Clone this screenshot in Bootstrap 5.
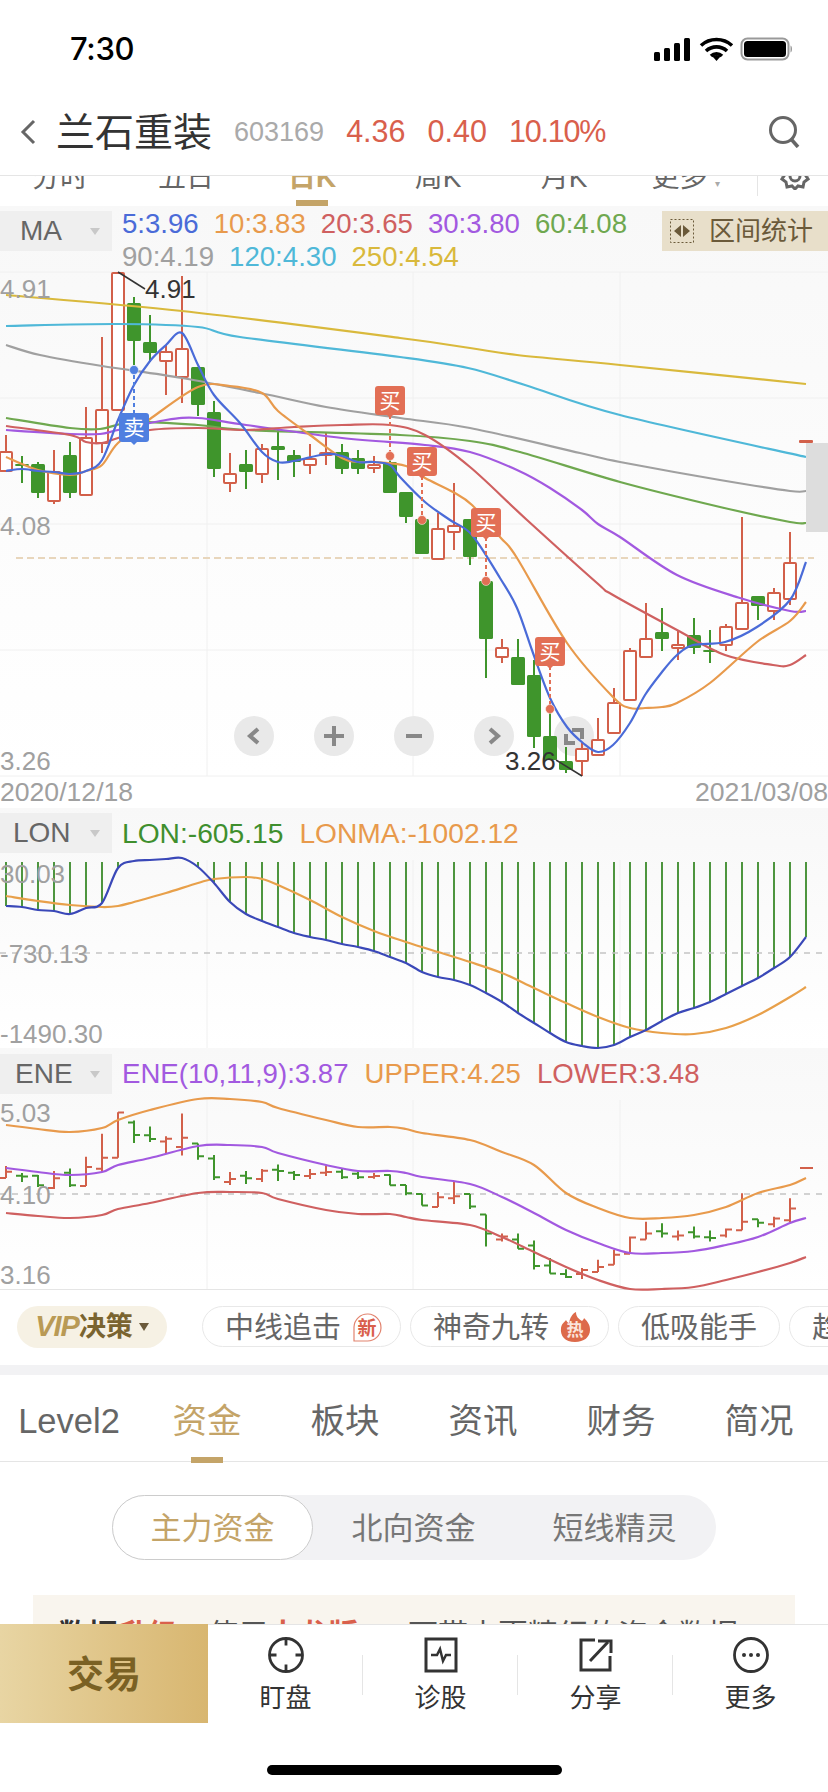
<!DOCTYPE html>
<html lang="zh">
<head>
  <meta charset="UTF-8">
  <meta name="viewport" content="width=device-width, initial-scale=1">
  <title>兰石重装</title>
  <link href="https://cdn.jsdelivr.net/npm/bootstrap@5.3.2/dist/css/bootstrap.min.css" rel="stylesheet">
  <style>
    body { width: 828px; height: 1792px; overflow: hidden; position: relative; background: #fff; color: #666;
      font-family: "Liberation Sans", "Noto Sans CJK SC", sans-serif; }
    .status-row { height: 100px; padding: 0 35px 2px 70px; }
    .clock { font-family: Inter, sans-serif; font-weight: 500; font-size: 31px; color: #000; letter-spacing: -.3px; }
    .top-nav { height: 76px; padding: 0 28px 11px 20px; border-bottom: 1px solid #e5e5e5; }
    .stock-name { font-size: 39px; color: #333; margin-left: 20px; line-height: 1; }
    .stock-code { font-size: 27px; color: #aaa; margin-left: 22px; }
    .stock-num { font-size: 30.5px; color: #d9604c; margin-left: 22px; }
    .stock-pct { letter-spacing: -1.2px; }
    .period-tabs { height: 30px; overflow: hidden; }
    .period-tab { width: 126px; height: 30px; position: relative; font-size: 28px; color: #666; }
    .period-tab span { margin-top: -13px; line-height: 30px; }
    .period-tab:first-child { margin-left: -3px; }
    .period-tab.on { color: #c4a468; font-weight: 700; }
    .period-tab.on::after { content: ""; position: absolute; left: 47px; bottom: 0; width: 32px; height: 6px; background: #c4a468; }
    .period-tab small { font-size: 10px; color: #aaa; }
    .period-more { margin-right: 3px; padding-right: 8px; }
    .gear-cell { height: 20px; margin-left: 1px; border-left: 1px solid #e5e5e5; padding-left: 22px; }
    .chart-panel { background: linear-gradient(#f8f8f8, #fff); }
    .ma-panel { height: 570px; }
    .lon-panel { height: 240px; }
    .ene-panel { height: 242px; border-bottom: 1px solid #e5e5e5; }
    .panel-head { height: 52px; padding-top: 5px; }
    .ene-panel .panel-head { padding-top: 6px; }
    .ma-head { height: 66px; }
    .pick { width: 112px; height: 40px; background: #efefef; color: #666; font-size: 28px; flex: none; position: relative; }
    .pick-ma { margin-top: 5px; padding-left: 20px; }
    .pick-lon { padding-left: 13px; }
    .pick-ene { padding-left: 15px; }
    .pick i { position: absolute; right: 12px; top: 17px; border: 5px solid transparent; border-top: 7px solid #c8c8c8; border-bottom: 0; }
    .vals { font-size: 27.6px; margin-left: 10px; white-space: nowrap; }
    .ma-vals { padding-top: 1px; }
    .val-line { line-height: 33px; column-gap: 15px; }
    .head-line { line-height: 40px; column-gap: 16px; }
    .lon-line { font-size: 28.2px; }
    .range-btn { width: 166px; height: 40px; background: #e8dfca; color: #6b5a3a; font-size: 26px; margin-top: 5px; padding-left: 8px; gap: 15px; }
    .chart-svg { display: block; overflow: visible; }
    .chart-svg text { font-family: "Liberation Sans", "Noto Sans CJK SC", sans-serif; }
    .date-row { height: 32px; font-size: 26.6px; color: #a0a0a0; line-height: 32px; }
    .c-blue { color: #4a6bd8; } .c-orange { color: #e89a4c; } .c-red { color: #cf6060; }
    .c-purple { color: #a259e0; } .c-green { color: #6fa84f; } .c-gray { color: #a0a0a0; }
    .c-cyan { color: #4fb8d8; } .c-yellow { color: #d9b93c; } .c-lon { color: #3f8f2e; }
    .chips-row { height: 75px; padding: 16px 0 0 17px; overflow: hidden; white-space: nowrap; }
    .vip-pill { width: 150px; height: 42px; background: #f6f1e4; margin-right: 35px; color: #7a6430; font-size: 27px; font-weight: 700; flex: none; }
    .vip-pill b { font-style: italic; color: #b99a55; font-size: 29px; letter-spacing: -1px; }
    .vip-pill i { border: 5px solid transparent; border-top: 8px solid #6b5a3a; border-bottom: 0; margin-left: 6px; }
    .chip { height: 41px; border: 1px solid #e8e8e8; margin-right: 9px; font-size: 29px; color: #666; padding-left: 22px; flex: none; gap: 10px; }
    .chip-wide { width: 199px; }
    .chip-mid { width: 162px; }
    .chip-end { width: 120px; }
    .chip span { padding-top: 4px; }
    .gap-band { height: 10px; background: #f2f2f4; }
    .detail-tabs { height: 87px; border-bottom: 1px solid #e5e5e5; }
    .detail-tab { width: 138px; height: 87px; position: relative; font-size: 34.5px; color: #666; padding-top: 6px; }
    .detail-tab.on { color: #c4a468; }
    .detail-tab.on::after { content: ""; position: absolute; left: 53px; bottom: -1px; width: 32px; height: 6px; background: #c4a468; }
    .segment { width: 604px; height: 65px; margin-top: 33px; background: #f2f2f4; border-radius: 33px; }
    .seg-item { width: 201px; font-size: 31px; color: #777; padding-top: 3px; }
    .seg-item.on { background: #fff; border: 1px solid #ccc; border-radius: 33px; color: #c4a468; }
    .notice { margin: 35px 33px 0; background: #f9f5ee; padding: 24px 25px; font-size: 30px; line-height: 32px; height: 120px; color: #555; white-space: nowrap; overflow: hidden; }
    .notice b { color: #333; } .notice em { color: #d9604c; font-style: normal; font-weight: 700; }
    .bottom-bar { height: 168px; left: 0; right: 0; background: #fff; border-top: 1px solid #e5e5e5; }
    .trade-btn { width: 208px; height: 99px; background: linear-gradient(90deg, #e8d5a3, #d8b670); color: #7a6124; font-size: 37px; font-weight: 700; margin-top: -1px; padding-top: 4px; }
    .tool-item { width: 155px; height: 98px; padding-top: 12px; font-size: 26px; color: #333; position: relative; line-height: 30px; }
    .tool-item svg { display: block; margin-bottom: 10px; }
    .tool-item:not(:last-child)::after { content: ""; position: absolute; right: 0; top: 30px; height: 40px; border-right: 1px solid #e5e5e5; }
    .home-bar { width: 295px; height: 10px; background: #000; border-radius: 5px; margin: 42px auto 0; }
  </style>
</head>
<body>

<div class="status-row d-flex align-items-center justify-content-between">
  <div class="clock">7:30</div>
  <svg width="139" height="24" viewBox="0 0 139 24">
    <g fill="#000"><rect x="0" y="15" width="6" height="9" rx="1.5"/><rect x="10" y="11" width="6" height="13" rx="1.5"/><rect x="20" y="6" width="6" height="18" rx="1.5"/><rect x="30" y="1" width="6" height="23" rx="1.5"/></g>
    <path d="M47 8.500a23 23 0 0 1 31 0M52 14a15.500 15.500 0 0 1 21 0M57 19a8 8 0 0 1 11 0" fill="none" stroke="#000" stroke-width="3.600"/>
    <path d="M62.500 24l-4-4.500a6 6 0 0 1 8 0z" fill="#000"/>
    <rect x="87.500" y="1.500" width="47" height="21" rx="6" fill="none" stroke="#999" stroke-width="2"/>
    <rect x="90" y="4" width="42" height="16" rx="3.500" fill="#000"/>
    <path d="M136.500 8.500c2 .5 2 6.500 0 7z" fill="#999"/>
  </svg>
</div>

<div class="top-nav d-flex align-items-center">
  <svg width="16" height="26" viewBox="0 0 16 26"><path d="M14 2L3 13l11 11" fill="none" stroke="#666" stroke-width="3"/></svg>
  <div class="stock-name">兰石重装</div>
  <div class="stock-code">603169</div>
  <div class="stock-num">4.36</div>
  <div class="stock-num">0.40</div>
  <div class="stock-num stock-pct">10.10%</div>
  <svg class="ms-auto" width="32" height="32" viewBox="0 0 32 32"><circle cx="15" cy="14" r="12.500" fill="none" stroke="#666" stroke-width="3"/><path d="M23 23l7 8" stroke="#666" stroke-width="3.500"/></svg>
</div>

<div class="period-tabs d-flex align-items-start">
  <div class="period-tab d-flex justify-content-center"><span>分时</span></div>
  <div class="period-tab d-flex justify-content-center"><span>五日</span></div>
  <div class="period-tab on d-flex justify-content-center"><span>日K</span></div>
  <div class="period-tab d-flex justify-content-center"><span>周K</span></div>
  <div class="period-tab d-flex justify-content-center"><span>月K</span></div>
  <div class="period-tab period-more d-flex justify-content-center"><span>更多 <small>▾</small></span></div>
  <div class="gear-cell">
    <svg width="30" height="14" viewBox="0 15 30 14" class="d-block"><path d="M15 4l3 3 5-1 1 5 4 3-2 1 2 3-4 3-1 5-5-1-3 3-3-3-5 1-1-5-4-3 2-3-2-1 4-3 1-5 5 1z" fill="none" stroke="#666" stroke-width="3"/><circle cx="15" cy="15" r="5" fill="none" stroke="#666" stroke-width="3"/></svg>
  </div>
</div>

<section class="chart-panel ma-panel">
  <div class="ma-head d-flex align-items-start">
    <div class="pick pick-ma d-flex align-items-center">MA<i></i></div>
    <div class="vals ma-vals flex-grow-1">
      <div class="val-line d-flex"><span class="c-blue">5:3.96</span><span class="c-orange">10:3.83</span><span class="c-red">20:3.65</span><span class="c-purple">30:3.80</span><span class="c-green">60:4.08</span></div>
      <div class="val-line d-flex"><span class="c-gray">90:4.19</span><span class="c-cyan">120:4.30</span><span class="c-yellow">250:4.54</span></div>
    </div>
    <div class="range-btn d-flex align-items-center">
      <svg width="24" height="24" viewBox="0 0 24 24"><rect x=".5" y=".5" width="23" height="23" fill="none" stroke="#6b5a3a" stroke-dasharray="2 2"/><path d="M11 6v12l-7-6zM13 6v12l7-6z" fill="#6b5a3a"/></svg>
      <span>区间统计</span>
    </div>
  </div>
  <svg id="maChart" class="chart-svg" width="828" height="504" viewBox="0 272 828 504"></svg>
</section>
<div class="date-row d-flex justify-content-between"><span>2020/12/18</span><span>2021/03/08</span></div>

<section class="chart-panel lon-panel">
  <div class="panel-head d-flex align-items-start">
    <div class="pick pick-lon d-flex align-items-center">LON<i></i></div>
    <div class="vals lon-line head-line d-flex"><span class="c-lon">LON:-605.15</span><span class="c-orange">LONMA:-1002.12</span></div>
  </div>
  <svg id="lonChart" class="chart-svg" width="828" height="188" viewBox="0 860 828 188"></svg>
</section>

<section class="chart-panel ene-panel">
  <div class="panel-head d-flex align-items-start">
    <div class="pick pick-ene d-flex align-items-center">ENE<i></i></div>
    <div class="vals head-line d-flex"><span class="c-purple">ENE(10,11,9):3.87</span><span class="c-orange">UPPER:4.25</span><span class="c-red">LOWER:3.48</span></div>
  </div>
  <svg id="eneChart" class="chart-svg" width="828" height="189" viewBox="0 1100 828 189"></svg>
</section>

<div class="chips-row d-flex align-items-start">
  <div class="vip-pill rounded-pill d-flex align-items-center justify-content-center"><b>VIP</b><span>决策</span><i></i></div>
  <div class="chip chip-wide rounded-pill d-inline-flex align-items-center"><span>中线追击</span>
    <svg width="32" height="30" viewBox="0 0 32 30"><path d="M3 29V15A13.500 13.500 0 1 1 16 29z" fill="#fff" stroke="#e2846f" stroke-width="1.200"/><text x="16" y="23" text-anchor="middle" font-size="19" font-weight="700" fill="#d9604c">新</text></svg>
  </div>
  <div class="chip chip-wide rounded-pill d-inline-flex align-items-center"><span>神奇九转</span>
    <svg width="32" height="32" viewBox="0 0 32 32"><path d="M16 31C6 31 1 25 2 17c1-5 3-5 5-8 1 2 2 3 3 3 1-5 3-9 7-11 0 5 3 7 6 9 1-1 2-2 2-3 4 4 6 7 6 12 0 7-6 12-15 12z" fill="#dd6a4a"/><text x="16" y="25" text-anchor="middle" font-size="17" font-weight="700" fill="#fbe4dc">热</text></svg>
  </div>
  <div class="chip chip-mid rounded-pill d-inline-flex align-items-center"><span>低吸能手</span></div>
  <div class="chip chip-end rounded-pill d-inline-flex align-items-center"><span>趋势</span></div>
</div>
<div class="gap-band"></div>

<div class="detail-tabs d-flex">
  <div class="detail-tab d-flex align-items-center justify-content-center">Level2</div>
  <div class="detail-tab on d-flex align-items-center justify-content-center">资金</div>
  <div class="detail-tab d-flex align-items-center justify-content-center">板块</div>
  <div class="detail-tab d-flex align-items-center justify-content-center">资讯</div>
  <div class="detail-tab d-flex align-items-center justify-content-center">财务</div>
  <div class="detail-tab d-flex align-items-center justify-content-center">简况</div>
</div>

<div class="segment d-flex mx-auto">
  <div class="seg-item on d-flex align-items-center justify-content-center">主力资金</div>
  <div class="seg-item d-flex align-items-center justify-content-center">北向资金</div>
  <div class="seg-item d-flex align-items-center justify-content-center">短线精灵</div>
</div>

<div class="notice"><b>数据</b><em>升级</em>，使用<em>大龙版</em>&nbsp;&nbsp;&nbsp;&nbsp;&nbsp;&nbsp;可带来更精细的资金数据</div>

<div class="bottom-bar position-absolute bottom-0">
  <div class="d-flex">
    <div class="trade-btn d-flex align-items-center justify-content-center">交易</div>
    <div class="tool-item d-flex flex-column align-items-center">
      <svg width="36" height="36" viewBox="0 0 36 36"><g fill="none" stroke="#333" stroke-width="2.800"><circle cx="18" cy="18" r="16.500"/><path d="M18 1.500v7M18 27.500v7M1.500 18h7M27.500 18h7"/></g></svg>
      盯盘
    </div>
    <div class="tool-item d-flex flex-column align-items-center">
      <svg width="36" height="36" viewBox="0 0 36 36"><rect x="3" y="2" width="30" height="32" fill="none" stroke="#333" stroke-width="3"/><path d="M8 18h6l3-6 3 12 3-6h5" fill="none" stroke="#333" stroke-width="2.500"/></svg>
      诊股
    </div>
    <div class="tool-item d-flex flex-column align-items-center">
      <svg width="36" height="36" viewBox="0 0 36 36"><path d="M17 3H3v30h29V19" fill="none" stroke="#333" stroke-width="3"/><path d="M12 24L30 5" stroke="#333" stroke-width="3"/><path d="M20 4h13v12" fill="none" stroke="#333" stroke-width="3"/></svg>
      分享
    </div>
    <div class="tool-item d-flex flex-column align-items-center">
      <svg width="36" height="36" viewBox="0 0 36 36"><circle cx="18" cy="18" r="16.500" fill="none" stroke="#333" stroke-width="2.800"/><circle cx="11" cy="18" r="2" fill="#333"/><circle cx="18" cy="18" r="2" fill="#333"/><circle cx="25" cy="18" r="2" fill="#333"/></svg>
      更多
    </div>
  </div>
  <div class="home-bar"></div>
</div>

<script>
  const RED = '#d2604a', GREEN = '#3f952c';

  // candles: colour, body top, body bottom, wick top, wick bottom
  const candles = [
    ['r',452,471,435,471],['g',464,466,456,483],['g',464,493,462,498],['r',472,501,450,504],
    ['g',455,493,442,498],['r',438,495,407,495],['r',410,443,337,453],['r',273,410,272,410],
    ['g',303,341,297,365],['g',342,353,315,362],['r',352,361,345,395],['r',349,377,276,403],
    ['g',367,405,367,416],['g',412,469,401,477],['r',474,483,453,492],['g',464,472,450,489],
    ['r',449,474,444,483],['g',446,450,430,480],['g',455,462,450,477],['r',459,465,444,474],
    ['r',453,455,433,465],['g',452,469,444,474],['g',458,469,450,474],['r',465,468,456,473],
    ['g',462,493,460,493],['g',492,517,492,523],['g',519,554,519,554],['r',529,559,513,559],
    ['r',526,532,483,550],['g',519,557,519,565],['g',581,639,581,678],['r',648,657,639,663],
    ['g',657,685,639,685],['g',675,737,660,748],['g',736,760,713,760],['g',761,770,747,773],
    ['r',749,761,743,776],['r',740,755,718,755],['r',703,733,688,733],['r',651,700,648,700],
    ['r',639,657,603,657],['g',632,639,608,651],['r',645,648,630,660],['g',635,648,618,654],
    ['g',650,652,630,663],['r',627,645,624,651],['r',603,629,517,629],['g',596,606,596,620],
    ['r',593,611,588,620],['r',563,599,532,605]
  ];

  const maLines = {
    '#d9b93c': [[6,295],[182,311],[400,338],[470,348],[517,355],[620,365],[806,384]],
    '#4fb8d8': [[6,326],[118,324],[198,327],[240,337],[400,357],[468,368],[525,385],[620,415],[806,457]],
    '#a0a0a0': [[6,345],[40,355],[102,366],[182,378],[260,393],[326,407],[400,418],[470,428],[580,453],[620,462],[720,480],[790,491],[806,491]],
    '#6fa84f': [[6,418],[70,428],[100,429],[134,422],[198,425],[246,430],[400,435],[470,441],[520,452],[620,482],[720,507],[790,522],[806,523]],
    '#a259e0': [[6,430],[70,434],[100,434],[118,430],[166,420],[198,418],[246,425],[342,438],[425,445],[470,452],[517,470],[550,488],[582,510],[598,524],[620,537],[677,575],[740,598],[790,611],[806,611]],
    '#cf6060': [[6,426],[70,435],[86,442],[102,443],[118,438],[150,430],[198,428],[246,430],[294,427],[342,425],[390,425],[425,435],[470,467],[527,520],[597,583],[613,595],[677,630],[725,655],[773,665],[790,665],[806,655]],
    '#e89a4c': [[6,457],[38,470],[70,475],[86,471],[102,465],[118,443],[150,419],[198,387],[230,386],[262,393],[278,411],[310,435],[342,458],[358,462],[374,462],[406,466],[425,478],[453,492],[472,505],[500,537],[517,558],[567,643],[613,697],[630,708],[645,708],[662,707],[677,703],[710,683],[757,642],[790,621],[806,602]],
    '#4a6bd8': [[6,471],[22,469],[38,471],[54,472],[70,474],[86,471],[102,460],[118,420],[134,385],[150,361],[166,345],[182,333],[198,365],[214,395],[240,423],[262,452],[278,462],[294,461],[326,454],[342,456],[358,462],[374,462],[390,465],[400,477],[425,502],[450,520],[472,535],[500,578],[517,608],[533,653],[550,698],[567,727],[583,743],[598,752],[613,745],[630,723],[645,695],[662,672],[677,655],[693,645],[725,642],[757,627],[790,600],[806,562]]
  };

  const lonBlue = [[6,906],[22,907],[38,910],[54,911],[70,914],[86,908],[102,903],[118,868],[134,861],[150,860],[166,859],[182,858],[198,867],[214,883],[230,902],[246,914],[262,921],[278,927],[294,933],[310,937],[326,940],[342,944],[358,947],[374,951],[390,957],[406,963],[422,972],[438,977],[454,980],[470,985],[486,993],[502,1002],[518,1013],[534,1023],[550,1033],[566,1042],[582,1046],[598,1048],[614,1045],[630,1037],[646,1030],[662,1021],[678,1013],[694,1008],[710,1002],[726,994],[742,986],[758,978],[774,968],[790,957],[806,937]];
  const lonOrange = [[6,896],[38,901],[70,905],[102,907],[118,906],[134,902],[166,893],[198,883],[214,879],[246,877],[262,879],[278,885],[310,900],[342,917],[374,931],[406,942],[438,952],[470,962],[502,973],[534,988],[566,1003],[598,1017],[630,1028],[662,1033],[694,1034],[726,1028],[758,1015],[790,997],[806,987]];

  const eneUpper = [[6,1125],[38,1129],[70,1132],[102,1128],[118,1120],[150,1110],[198,1099],[230,1099],[262,1102],[278,1108],[326,1120],[358,1127],[390,1127],[406,1129],[422,1133],[470,1140],[502,1152],[534,1165],[566,1193],[598,1208],[630,1218],[662,1218],[694,1215],[726,1207],[758,1193],[790,1185],[806,1178]];
  const eneMid = [[6,1168],[38,1172],[70,1175],[102,1172],[118,1165],[150,1158],[198,1146],[230,1145],[262,1147],[278,1153],[326,1165],[358,1171],[390,1171],[406,1173],[422,1177],[470,1184],[502,1197],[534,1213],[566,1230],[598,1243],[630,1253],[662,1253],[694,1251],[726,1245],[758,1237],[790,1223],[806,1218]];
  const eneLower = [[6,1213],[38,1216],[70,1218],[102,1215],[118,1209],[150,1203],[198,1193],[230,1192],[262,1193],[278,1199],[326,1210],[358,1214],[390,1214],[406,1217],[422,1220],[470,1225],[502,1237],[534,1252],[566,1267],[598,1280],[630,1289],[662,1289],[694,1287],[726,1280],[758,1272],[790,1263],[806,1257]];

  // catmull-rom so the averages don't kink at the sampled points
  function curve(pts, color, w) {
    let d = `M${pts[0]}`;
    for (let i = 0; i < pts.length - 1; i++) {
      const a = pts[i - 1] || pts[i], b = pts[i], c = pts[i + 1], e = pts[i + 2] || c;
      d += `C${(b[0] + (c[0] - a[0]) / 6).toFixed(1)} ${(b[1] + (c[1] - a[1]) / 6).toFixed(1)} ${(c[0] - (e[0] - b[0]) / 6).toFixed(1)} ${(c[1] - (e[1] - b[1]) / 6).toFixed(1)} ${c[0]} ${c[1]}`;
    }
    return `<path d="${d}" fill="none" stroke="${color}" stroke-width="${w}" stroke-linejoin="round"/>`;
  }
  const label = (x, y, str, color = '#a0a0a0') => `<text x="${x}" y="${y}" font-size="26" fill="${color}">${str}</text>`;
  const gridV = (top, bottom) => [207, 413, 620].map(x => `<line x1="${x}" y1="${top}" x2="${x}" y2="${bottom}" stroke="#f0f0f0"/>`).join('');

  function tradeTag(x, top, dotY, text, color) {
    return `<line x1="${x}" y1="${top + 29}" x2="${x}" y2="${dotY}" stroke="${color}" stroke-width="2" stroke-dasharray="4 3"/>` +
      `<circle cx="${x}" cy="${dotY}" r="4.500" fill="${color}" stroke="#fff" stroke-width=".5"/>` +
      `<rect x="${x - 15}" y="${top}" width="30" height="29" rx="3" fill="${color}"/>` +
      `<path d="M${x - 3} ${top + 29}h6l-3 3z" fill="${color}"/>` +
      `<text x="${x}" y="${top + 22}" text-anchor="middle" font-size="21" fill="#fff">${text}</text>`;
  }

  function drawMa() {
    let s = '';
    [272, 398, 524, 650, 776].forEach(y => s += `<line x1="0" y1="${y}" x2="828" y2="${y}" stroke="#f0f0f0"/>`);
    s += gridV(272, 776);
    s += `<line x1="16" y1="558" x2="814" y2="558" stroke="#e8d6bc" stroke-width="2" stroke-dasharray="7 4"/>`;

    // zoom and move buttons sit under the candles
    [254, 334, 414, 494, 574].forEach(x => s += `<circle cx="${x}" cy="736" r="20" fill="#e9e9e9"/>`);
    s += `<path d="M258 729l-8 7 8 7" fill="none" stroke="#888" stroke-width="4"/>`;
    s += `<path d="M324 736h20M334 726v20" stroke="#888" stroke-width="4"/>`;
    s += `<path d="M406 736h16" stroke="#888" stroke-width="4"/>`;
    s += `<path d="M490 729l8 7-8 7" fill="none" stroke="#888" stroke-width="4"/>`;
    s += `<path d="M566 734v9h9M572 730h10v9" fill="none" stroke="#888" stroke-width="4"/>`;

    candles.forEach((c, i) => {
      const x = 6 + i * 16, col = c[0] === 'r' ? RED : GREEN;
      s += `<line x1="${x}" y1="${c[3]}" x2="${x}" y2="${c[4]}" stroke="${col}" stroke-width="2"/>`;
      if (c[0] === 'r') s += `<rect x="${x - 6}" y="${c[1]}" width="12" height="${c[2] - c[1]}" rx="1" fill="#fff" stroke="${col}" stroke-width="2"/>`;
      else s += `<rect x="${x - 7}" y="${c[1]}" width="14" height="${c[2] - c[1]}" rx="1.500" fill="${col}"/>`;
    });
    for (const col in maLines) s += curve(maLines[col], col, 2.2);

    s += `<rect x="799" y="440" width="14" height="3" rx="1" fill="${RED}"/>`;
    s += `<rect x="806" y="443" width="22" height="89" fill="#ddd"/>`;

    s += tradeTag(134, 413, 370, '卖', '#4f7fe0');
    s += tradeTag(390, 386, 456, '买', '#e26f55');
    s += tradeTag(422, 447, 520, '买', '#e26f55');
    s += tradeTag(486, 508, 581, '买', '#e26f55');
    s += tradeTag(550, 637, 709, '买', '#e26f55');

    s += label(0, 298, '4.91') + label(0, 535, '4.08') + label(0, 770, '3.26');
    s += `<polyline points="118,272 145,289" fill="none" stroke="#333" stroke-width="1.500"/>` + label(145, 298, '4.91', '#333');
    s += `<polyline points="556,760 582,776" fill="none" stroke="#333" stroke-width="1.500"/>` + label(505, 770, '3.26', '#333');
    document.getElementById('maChart').innerHTML = s;
  }

  function drawLon() {
    let s = gridV(860, 1048);
    lonBlue.forEach(p => { if (p[1] > 862) s += `<line x1="${p[0]}" y1="862" x2="${p[0]}" y2="${p[1]}" stroke="#3a8a2a" stroke-width="1.800"/>`; });
    s += `<line x1="0" y1="953" x2="828" y2="953" stroke="#c4c4c4" stroke-width="1.500" stroke-dasharray="6 6"/>`;
    s += curve(lonOrange, '#e8a04a', 2.2) + curve(lonBlue, '#3a48b8', 2.2);
    s += label(0, 883, '30.03') + label(0, 963, '-730.13') + label(0, 1043, '-1490.30');
    document.getElementById('lonChart').innerHTML = s;
  }

  function drawEne() {
    const toY = y => +(1112.2 + .3307 * (y - 272)).toFixed(1);
    let s = gridV(1100, 1289);
    s += `<line x1="0" y1="1194" x2="828" y2="1194" stroke="#c4c4c4" stroke-width="1.500" stroke-dasharray="6 6"/>`;
    candles.forEach((c, i) => {
      const x = 6 + i * 16, col = c[0] === 'r' ? RED : GREEN;
      const open = toY(c[0] === 'r' ? c[2] : c[1]), close = toY(c[0] === 'r' ? c[1] : c[2]);
      s += `<path d="M${x} ${toY(c[3])}V${toY(c[4])}M${x - 6} ${open}H${x}M${x} ${close}H${x + 6}" fill="none" stroke="${col}" stroke-width="2"/>`;
    });
    s += `<rect x="800" y="1167" width="13" height="2" fill="${RED}"/>`;
    s += curve(eneUpper, '#e89a4c', 2.2) + curve(eneMid, '#a259e0', 2.2) + curve(eneLower, '#cf6060', 2.2);
    s += label(0, 1122, '5.03') + label(0, 1204, '4.10') + label(0, 1284, '3.16');
    document.getElementById('eneChart').innerHTML = s;
  }

  drawMa();
  drawLon();
  drawEne();
</script>
<script src="https://cdn.jsdelivr.net/npm/bootstrap@5.3.2/dist/js/bootstrap.bundle.min.js"></script>
</body>
</html>
